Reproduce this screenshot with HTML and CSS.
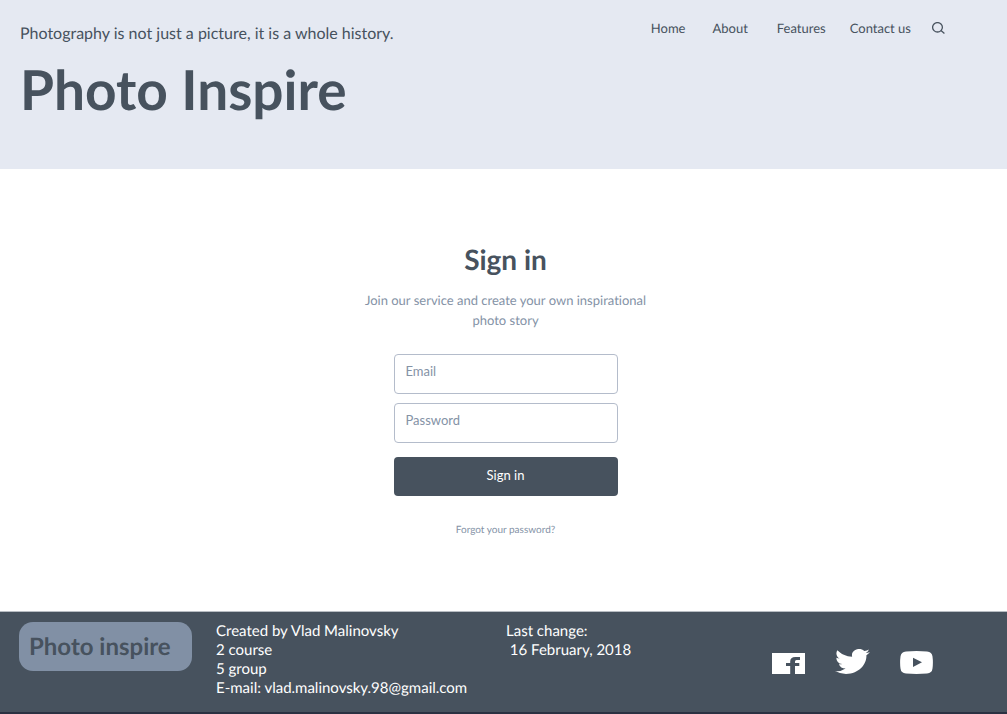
FILE: index.html
```html
<!DOCTYPE html>
<html lang="en">
<head>
<meta charset="utf-8">
<meta name="viewport" content="width=device-width, initial-scale=1">
<title>Photo Inspire</title>
<link rel="stylesheet" href="styles.css">
</head>
<body>
<header class="header">
  <div class="brand">
    <p class="tagline">Photography is not just a picture, it is a whole history.</p>
    <h1 class="title">Photo Inspire</h1>
  </div>
  <nav class="nav" aria-label="Main">
    <a class="nav-home" href="#">Home</a>
    <a class="nav-about" href="#">About</a>
    <a class="nav-features" href="#">Features</a>
    <a href="#">Contact us</a>
    <button class="search" type="button" aria-label="Search">
      <svg width="13" height="12" viewBox="0 0 13 12" fill="none" stroke="currentColor" stroke-width="1.3"><ellipse cx="5.5" cy="5.3" rx="4.900" ry="4.700"/><path d="M9 8.600l3.400 2.800"/></svg>
    </button>
  </nav>
</header>
<main class="main">
  <h2 class="heading">Sign in</h2>
  <p class="intro">Join our service and create your own inspirational photo story</p>
  <form class="form">
    <input class="field" type="email" placeholder="Email" aria-label="Email">
    <input class="field" type="password" placeholder="Password" aria-label="Password">
    <button class="submit" type="submit">Sign in</button>
  </form>
  <a class="forgot" href="#">Forgot your password?</a>
</main>
<footer class="footer">
  <div class="logo">Photo inspire</div>
  <p class="author">Created by Vlad Malinovsky<br>2 course<br>5 group<br>E-mail: vlad.malinovsky.98@gmail.com</p>
  <p class="changed">Last change:<br>&nbsp;16 February, 2018</p>
  <div class="social">
    <a href="#" aria-label="Facebook"><svg width="33" height="21" viewBox="0 0 33 21" fill="currentColor"><path d="M0 0H33V21H23V13H27.300V10H23V8.500Q23 7 24.500 7H28V4H23.300Q18.200 4 18.200 8.500V10H14V13H18.200V21H0Z"/></svg></a>
    <a href="#" aria-label="Twitter"><svg width="35" height="25" viewBox="0 2.200 24 19.600" preserveAspectRatio="none" fill="currentColor"><path d="M23.950 4.570a10 10 0 0 1-2.820.770 4.960 4.960 0 0 0 2.160-2.720c-.950.550-2 .950-3.130 1.180a4.920 4.920 0 0 0-8.380 4.480C7.690 8.100 4.070 6.130 1.640 3.160a4.820 4.820 0 0 0-.670 2.480c0 1.710.870 3.210 2.190 4.100a4.900 4.900 0 0 1-2.230-.620v.060a4.920 4.920 0 0 0 3.950 4.830 5 5 0 0 1-2.210.080 4.940 4.940 0 0 0 4.600 3.420A9.870 9.870 0 0 1 0 19.540a13.940 13.940 0 0 0 7.550 2.210c9.050 0 14-7.500 14-13.980 0-.210 0-.420-.020-.630a9.940 9.940 0 0 0 2.420-2.570z"/></svg></a>
    <a href="#" aria-label="YouTube"><svg width="33" height="23" viewBox="0 0 33 23" fill="currentColor" fill-rule="evenodd"><path d="M6 .500Q16.500-.400 27 .500 32 .800 32.500 5.500 33.300 11.500 32.500 17.500 32 22.200 27 22.500 16.500 23.400 6 22.500 1 22.200.500 17.500-.300 11.500.500 5.500 1 .800 6 .500ZM13 6.700V16L22 11.300Z"/></svg></a>
  </div>
</footer>
</body>
</html>
```

FILE: styles.css
```css
* { box-sizing: border-box; }

body {
  margin: 0;
  min-height: 100vh;
  display: flex;
  flex-direction: column;
  background: #fff;
  color: #47525e;
  font-family: Lato, "Liberation Sans", sans-serif;
  font-size: 13px;
  font-variant-ligatures: none;
  text-rendering: geometricPrecision;
}

h1, h2, p { margin: 0; }
a { color: inherit; text-decoration: none; }
svg { display: block; }

.header {
  display: flex;
  justify-content: space-between;
  align-items: flex-start;
  padding: 20px 62px 44px 20px;
  background: #e5e9f2;
}

.tagline { font-size: 16px; line-height: 28px; }
.title { margin-top: 5px; font-size: 55px; line-height: 72px; font-weight: 700; }

.nav {
  display: flex;
  align-items: center;
  gap: 21px;
  line-height: 16px;
}
.nav-home { margin-right: 6px; }
.nav-about { margin-right: 8px; }
.nav-features { margin-right: 3px; }

.search {
  padding: 0;
  border: 0;
  background: none;
  color: inherit;
}

.main {
  flex: 1;
  display: flex;
  flex-direction: column;
  align-items: center;
  padding: 70px 20px 60px 24px;
}
.heading { font-size: 28px; line-height: 40px; }
.intro {
  max-width: 300px;
  margin-top: 11px;
  color: #8492a6;
  line-height: 20px;
  text-align: center;
}

.form {
  display: flex;
  flex-direction: column;
  width: 100%;
  max-width: 224px;
  margin-top: 24px;
}
.field {
  height: 40px;
  margin-bottom: 9px;
  padding: 0 11px 6px;
  border: 1px solid #b4bccb;
  border-radius: 4px;
  background: #fff;
  color: #47525e;
  font: inherit;
}
.field::placeholder { color: #8492a6; opacity: 1; }
.submit {
  height: 39px;
  margin-top: 5px;
  padding: 0 0 4px;
  border: 0;
  border-radius: 4px;
  background: #47525e;
  color: #fff;
  font: inherit;
}
.forgot {
  margin-top: 27px;
  color: #8492a6;
  font-size: 10px;
  line-height: 14px;
}

.footer {
  display: flex;
  align-items: flex-start;
  padding: 10px 74px 14px 19px;
  border-top: 1px solid #b8bdc3;
  border-bottom: 2px solid #2b3142;
  background: #47525e;
  color: #fff;
  font-size: 15px;
  line-height: 19px;
}
.logo {
  width: 173px;
  padding: 9px 10px;
  border-radius: 14px;
  background: #8190a5;
  color: #47525e;
  font-size: 24px;
  line-height: 31px;
  font-weight: 700;
}
.author { margin-left: 24px; width: 250px; white-space: nowrap; }
.changed { margin-left: 40px; }
.social {
  display: flex;
  align-items: flex-end;
  gap: 30px;
  margin-top: 27px;
  margin-left: auto;
}
```
